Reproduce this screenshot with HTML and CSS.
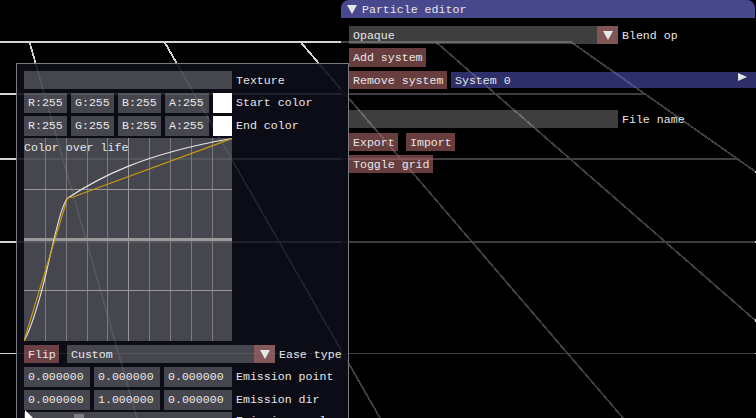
FILE: index.html
```html
<!DOCTYPE html>
<html lang="en">
<head>
<meta charset="utf-8">
<title>Particle editor</title>
<link rel="stylesheet" href="styles.css">
</head>
<body>
<svg class="scene" viewBox="0 0 756 418" aria-hidden="true">
  <g class="scene-rows">
    <path d="M0 42H571M0 94H645M0 159H739M0 242H756"/>
    <path class="thin" d="M0 353.5H756"/>
  </g>
  <path class="scene-rays" d="M29.5 42L137 418M164.5 42L380 418M300.500 42L623 418M436 42L756 321M571 42L756 172"/>
</svg>

<section class="window editor">
  <header class="title-bar"><svg class="tri" viewBox="0 0 10 9"><path d="M0 0H10L5 9Z"/></svg><span>Particle editor</span></header>
  <div class="editor-body">
    <div class="row"><div class="combo wide"><span>Opaque</span><i class="combo-btn"><svg class="tri" viewBox="0 0 10 9"><path d="M0 0H10L5 9Z"/></svg></i></div><label>Blend op</label></div>
    <div class="row tall"><button class="add">Add system</button></div>
    <div class="row"><button class="remove">Remove system</button><div class="menu"><span>System 0</span><svg class="play" viewBox="0 0 9 8"><path d="M0 0L9 4L0 8Z"/></svg></div></div>
    <div class="row file"><div class="field wide"></div><label>File name</label></div>
    <div class="row export"><button class="io">Export</button><button class="io">Import</button></div>
    <div class="row"><button class="toggle">Toggle grid</button></div>
  </div>
</section>

<section class="window system">
  <div class="row"><div class="field full"></div><label>Texture</label></div>
  <div class="row tall"><div class="channels"><div class="field">R:255</div><div class="field">G:255</div><div class="field">B:255</div><div class="field">A:255</div><i class="swatch"></i></div><label>Start color</label></div>
  <div class="row"><div class="channels"><div class="field">R:255</div><div class="field">G:255</div><div class="field">B:255</div><div class="field">A:255</div><i class="swatch"></i></div><label>End color</label></div>
  <div class="plot">
    <svg class="curve" viewBox="24 138 208 203">
      <path class="grid" d="M45.500 138V341M66.500 138V341M87.500 138V341M107.500 138V341M149.500 138V341M170.500 138V341M191.500 138V341M212.500 138V341"/>
      <path class="grid strong" d="M128.500 138V341M24 189.500H232M24 290.500H232"/>
      <path class="axis" d="M24 239.500H232"/>
      <path class="eased" d="M24 341C34 323 41 293 45 278L54 239C59 219 62 207 67 198.500C98 178 142 154 232 138.500"/>
      <path class="linear" d="M24 341L67.500 198L73 197L232 138.500"/>
    </svg>
    <span class="plot-title">Color over life</span>
  </div>
  <div class="row"><button class="flip">Flip</button><div class="combo ease"><span>Custom</span><i class="combo-btn"><svg class="tri" viewBox="0 0 10 9"><path d="M0 0H10L5 9Z"/></svg></i></div><label>Ease type</label></div>
  <div class="row tall"><div class="vector"><div class="field">0.000000</div><div class="field">0.000000</div><div class="field">0.000000</div></div><label>Emission point</label></div>
  <div class="row"><div class="vector"><div class="field">0.000000</div><div class="field">1.000000</div><div class="field">0.000000</div></div><label>Emission dir</label></div>
  <div class="row last"><div class="field full slider"><i class="grab"></i></div><label>Emission angle</label></div>
</section>
<svg class="cursor" viewBox="0 0 12 8"><path d="M0 0L8 8H0Z"/></svg>
</body>
</html>
```

FILE: styles.css
```css
* { box-sizing: border-box; }
body {
  margin: 0;
  width: 756px;
  height: 418px;
  position: relative;
  overflow: hidden;
  background: #000;
  color: #e6e6e6;
  font: 11.6px/20px "Liberation Mono", monospace;
}
svg { display: block; }
.scene { position: absolute; inset: 0; width: 756px; height: 418px; fill: none; stroke: #d4d4d4; stroke-width: 2; }
.scene-rays { stroke-width: 1.8; shape-rendering: crispEdges; }
.thin { stroke-width: 1; }

.window { position: absolute; }
.editor { left: 341px; top: 0; width: 415px; height: 418px; background: linear-gradient(rgba(0, 0, 0, .7), rgba(0, 0, 0, .7)) 0 0 / 414px 100% no-repeat; }
.title-bar {
  width: 414px;
  height: 18px;
  display: flex;
  align-items: center;
  gap: 5px;
  padding-left: 6px;
  line-height: 18px;
  border-radius: 8px 8px 0 0;
  background: #48488d;
}
.title-bar span { padding-top: 1px; }
.tri { width: 10px; height: 9px; fill: #e6e6e6; }
.editor-body { padding: 8px 0 0 8px; display: flex; flex-direction: column; gap: 4px; }
.row { display: flex; gap: 4px; height: 18px; flex: none; white-space: nowrap; }
.row > * { flex-shrink: 0; }
.tall { height: 19px; }
.field { background: rgba(204, 204, 204, .3); padding-left: 4px; }
.combo { display: flex; justify-content: space-between; background: rgba(204, 204, 204, .3); padding-left: 4px; }
.combo-btn { width: 21px; display: flex; align-items: center; justify-content: center; background: rgba(171, 102, 102, .6); }
.wide { width: 269px; }
.full { width: 208px; }
button {
  font: inherit;
  color: inherit;
  border: 0;
  margin: 0;
  padding: 1px 0 0 4px;
  line-height: 18px;
  text-align: left;
  background: rgba(171, 102, 102, .6);
}
.add { width: 77px; }
.remove { width: 98px; }
.menu {
  display: flex;
  flex: 1;
  justify-content: space-between;
  height: 16px;
  margin-top: 1px;
  padding: 0 9px 0 4px;
  line-height: 18px;
  background: rgba(102, 102, 230, .45);
}
.play { width: 9px; height: 8px; margin-top: 1px; fill: #e6e6e6; }
.file { margin-top: 17px; }
.export { gap: 8px; margin-top: 1px; }
.io { width: 49px; }
.toggle { width: 84px; }

.system {
  left: 16px;
  top: 63px;
  width: 333px;
  height: 355px;
  padding: 7px 7px 0;
  display: flex;
  flex-direction: column;
  gap: 4px;
  border: 1px solid #7c7c80;
  border-bottom: 0;
  background: rgba(13, 13, 25, .9);
  overflow: hidden;
}
.channels { display: grid; grid-template-columns: 43px 43px 43px 44px 19px; gap: 4px; }
.vector { display: grid; grid-template-columns: 66px 66px 68px; gap: 4px; }
.swatch { background: #fff; }
.plot { position: relative; width: 208px; height: 203px; flex: none; background: rgba(204, 204, 204, .3); }
.curve { width: 208px; height: 203px; fill: none; }
.plot-title { position: absolute; left: 0; top: 0; }
.grid { stroke: #7b7b7b; }
.strong { stroke: #999; }
.axis { stroke: #999; stroke-width: 3; }
.eased { stroke: #e6e6e6; stroke-width: 1.1; }
.linear { stroke: #c99b0d; stroke-width: 1.2; }
.flip { width: 35px; margin-right: 4px; }
.ease { width: 208px; }
.last { height: 6px; line-height: 18px; }
.slider { padding: 2px 0 0 50px; }
.grab { display: block; width: 10px; height: 4px; background: #7b7b80; }
.cursor { position: absolute; left: 25px; top: 410px; width: 12px; height: 8px; fill: #fff; }
```
